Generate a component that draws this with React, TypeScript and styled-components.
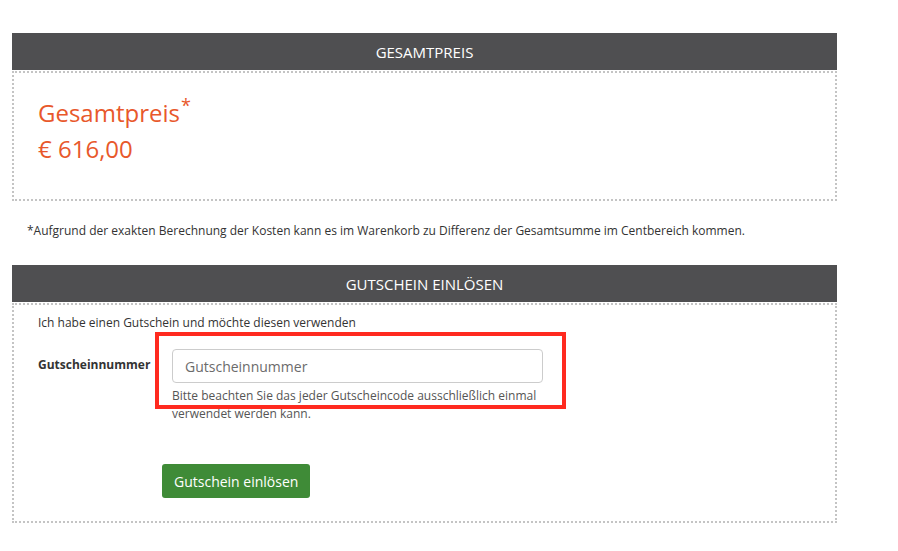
import React from 'react';
import styled, { createGlobalStyle } from 'styled-components';

const GlobalStyle = createGlobalStyle`
  html, body {
    margin: 0;
    padding: 0;
    background: #ffffff;
  }
  body {
    font-family: 'Open Sans', 'Liberation Sans', sans-serif;
    color: #333333;
  }
  * {
    box-sizing: border-box;
  }
`;

const App: React.FC = () => {
  return (
    <>
      <GlobalStyle />
      <Page>
        <Section>
          <Header>Gesamtpreis</Header>
          <PriceBox>
            <PriceLine>
              Gesamtpreis<Star>*</Star>
            </PriceLine>
            <PriceLine>€ 616,00</PriceLine>
          </PriceBox>
        </Section>

        <Footnote>
          *Aufgrund der exakten Berechnung der Kosten kann es im Warenkorb zu
          Differenz der Gesamtsumme im Centbereich kommen.
        </Footnote>

        <Section>
          <Header>Gutschein einlösen</Header>
          <VoucherBox>
            <Intro>Ich habe einen Gutschein und möchte diesen verwenden</Intro>
            <FormRow>
              <Label htmlFor="voucher">Gutscheinnummer</Label>
              <Field>
                <Input id="voucher" type="text" placeholder="Gutscheinnummer" />
                <Help>
                  Bitte beachten Sie das jeder Gutscheincode ausschließlich
                  einmal verwendet werden kann.
                </Help>
                <Highlight />
              </Field>
            </FormRow>
            <Button type="button">Gutschein einlösen</Button>
          </VoucherBox>
        </Section>
      </Page>
    </>
  );
};

// Styles
const Page = styled.div`
  width: 837px;
  padding: 33px 0 0 12px;
`;

const Section = styled.section`
  width: 825px;
`;

const Header = styled.div`
  height: 37px;
  background: #4f4f51;
  color: #ffffff;
  font-size: 15px;
  text-transform: uppercase;
  display: flex;
  align-items: center;
  justify-content: center;
`;

const DottedBox = styled.div`
  border: 2px dotted #c4c4c4;
  margin-top: 1px;
`;

const PriceBox = styled(DottedBox)`
  padding: 22px 24px 31px;
  height: 130px;
`;

const PriceLine = styled.div`
  color: #e8582b;
  font-size: 24px;
  line-height: 36px;
`;

const Star = styled.sup`
  font-size: 18px;
  line-height: 0;
  vertical-align: 0;
  position: relative;
  top: -10px;
  left: 1px;
`;

const Footnote = styled.p`
  margin: 21px 0 25px;
  padding-left: 15px;
  font-size: 12px;
  line-height: 18px;
  color: #333333;
`;

const VoucherBox = styled(DottedBox)`
  padding: 9px 24px 23px;
`;

const Intro = styled.div`
  font-size: 12px;
  line-height: 18px;
  color: #333333;
`;

const FormRow = styled.div`
  display: flex;
  margin-top: 17px;
`;

const Label = styled.label`
  width: 134px;
  flex-shrink: 0;
  font-size: 12px;
  font-weight: 700;
  line-height: 18px;
  padding-top: 7px;
  color: #333333;
`;

const Field = styled.div`
  position: relative;
  width: 371px;
`;

const Input = styled.input`
  display: block;
  width: 100%;
  height: 34px;
  border: 1px solid #cccccc;
  border-radius: 4px;
  padding: 0 12px;
  font-family: inherit;
  font-size: 14px;
  color: #555555;
  &::placeholder {
    color: #6b6b6b;
  }
`;

const Help = styled.div`
  margin-top: 4px;
  font-size: 12px;
  line-height: 18px;
  color: #555555;
`;

const Highlight = styled.span`
  position: absolute;
  left: -17px;
  top: -17px;
  width: 411px;
  height: 77px;
  border: 4px solid #ff2a1f;
  pointer-events: none;
`;

const Button = styled.button`
  display: block;
  margin: 41px 0 0 124px;
  height: 34px;
  padding: 0 12px;
  border: none;
  border-radius: 3px;
  background: #3f8b37;
  color: #ffffff;
  font-family: inherit;
  font-size: 14px;
  cursor: pointer;
`;

export default App;
